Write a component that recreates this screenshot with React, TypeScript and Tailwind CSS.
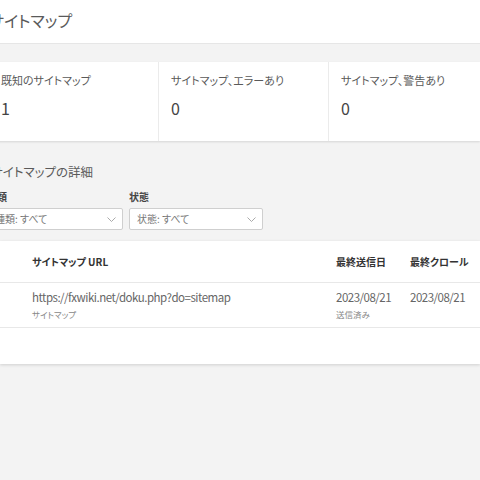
import React from "react";

const F = {
  fontFamily: '"Noto Sans CJK JP", "Noto Sans", sans-serif',
};

function Chevron() {
  return (
    <svg width="9" height="5" viewBox="0 0 9 5" fill="none" className="shrink-0">
      <path d="M0.5 0.5 L4.5 4.5 L8.5 0.5" stroke="#a0a0a0" strokeWidth="0.9" />
    </svg>
  );
}

function Select({ label, className }: { label: string; className: string }) {
  return (
    <div
      className={`h-[22px] bg-white border border-[#cfcfcf] rounded-[2px] flex items-center justify-between pl-[7px] pr-[6px] ${className}`}
    >
      <span className="text-[10px] text-[#777] leading-none">{label}</span>
      <Chevron />
    </div>
  );
}

export default function App() {
  return (
    <div
      className="w-[480px] h-[480px] overflow-hidden bg-[#f3f3f3] [font-feature-settings:'palt'] text-[#555]"
      style={F}
    >
      {/* header */}
      <div className="h-[44px] bg-white border-b border-[#e6e6e6] flex items-center -ml-[11px] pb-[4px]">
        <span className="text-[16px] leading-[20px] text-[#5a5a5a]">サイトマップ</span>
      </div>

      {/* cards */}
      <div className="mt-[18px] h-[79px] flex bg-white -ml-[11px] shadow-[0_1px_2px_rgba(0,0,0,0.12)]">
        {[
          ["既知のサイトマップ", "1"],
          ["サイトマップ、エラーあり", "0"],
          ["サイトマップ、警告あり", "0"],
        ].map(([l, n], i) => (
          <div
            key={i}
            className={`${i < 2 ? "w-[170px] border-r border-[#ebebeb]" : "flex-1"} pl-[12px] pt-[10px]`}
          >
            <div className="text-[11px] leading-[16px] text-[#5a5a5a]">{l}</div>
            <div className="mt-[9px] text-[16px] leading-[22px] text-[#444]">{n}</div>
          </div>
        ))}
      </div>

      {/* details section */}
      <div className="mt-[22px]">
        <div className="text-[12.5px] leading-[18px] text-[#5a5a5a] -ml-[9px]">サイトマップの詳細</div>
        <div className="mt-[9px] flex gap-[6px] -ml-[13px]">
          <div className="w-[136px]">
            <div className="text-[10px] leading-[14px] font-bold text-[#444]">種類</div>
            <Select label="種類: すべて" className="mt-[4px] w-[136px]" />
          </div>
          <div className="w-[134px]">
            <div className="text-[10px] leading-[14px] font-bold text-[#444]">状態</div>
            <Select label="状態: すべて" className="mt-[4px] w-[134px]" />
          </div>
        </div>
      </div>

      {/* table */}
      <div className="mt-[11px] bg-white h-[123px] shadow-[0_1px_3px_rgba(0,0,0,0.15)]">
        <div className="h-[42px] border-b border-[#e8e8e8] grid grid-cols-[304px_74px_1fr] pl-[32px] items-center">
          <div className="text-[10px] font-bold text-[#333]">サイトマップ URL</div>
          <div className="text-[10px] font-bold text-[#333]">最終送信日</div>
          <div className="text-[10px] font-bold text-[#333]">最終クロール</div>
        </div>
        <div className="h-[45px] border-b border-[#e8e8e8] grid grid-cols-[304px_74px_1fr] pl-[32px] pt-[6px]">
          <div>
            <div className="text-[11.5px] tracking-[-0.5px] leading-[16px] text-[#666]">https://fxwiki.net/doku.php?do=sitemap</div>
            <div className="mt-[3px] text-[8.5px] leading-[12px] text-[#888]">サイトマップ</div>
          </div>
          <div>
            <div className="text-[11.5px] tracking-[-0.5px] leading-[16px] text-[#666]">2023/08/21</div>
            <div className="mt-[3px] text-[8.5px] leading-[12px] text-[#888]">送信済み</div>
          </div>
          <div>
            <div className="text-[11.5px] tracking-[-0.5px] leading-[16px] text-[#666]">2023/08/21</div>
          </div>
        </div>
      </div>
    </div>
  );
}
